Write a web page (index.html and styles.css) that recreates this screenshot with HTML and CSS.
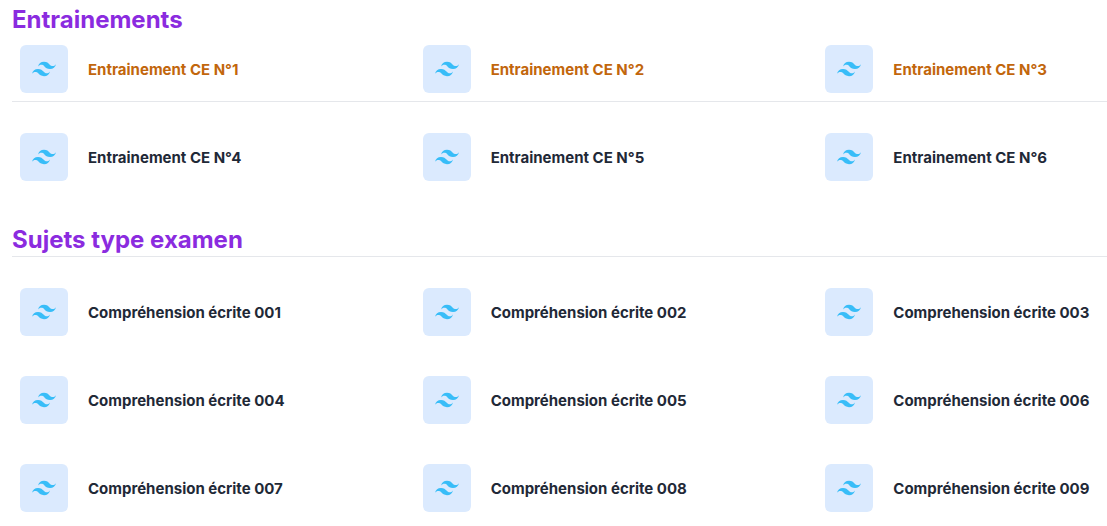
FILE: index.html
```html
<!DOCTYPE html>
<html lang="fr">
<head>
<meta charset="utf-8">
<meta name="viewport" content="width=device-width, initial-scale=1">
<title>Entrainements</title>
<link rel="stylesheet" href="styles.css">
</head>
<body>
<svg class="sprite" aria-hidden="true"><symbol id="wave" viewBox="0 0 24 24"><path d="M12.001 4.8c-3.2 0-5.2 1.6-6 4.8 1.2-1.6 2.6-2.2 4.2-1.8.913.228 1.565.89 2.288 1.624C13.666 10.618 15.027 12 18.001 12c3.2 0 5.2-1.6 6-4.8-1.2 1.6-2.6 2.2-4.2 1.8-.913-.228-1.565-.89-2.288-1.624C16.337 6.182 14.976 4.8 12.001 4.8zm-6 7.2c-3.2 0-5.2 1.6-6 4.8 1.2-1.6 2.6-2.2 4.2-1.8.913.228 1.565.89 2.288 1.624 1.177 1.194 2.538 2.576 5.512 2.576 3.2 0 5.2-1.6 6-4.8-1.2 1.6-2.6 2.2-4.2 1.8-.913-.228-1.565-.89-2.288-1.624C10.337 13.382 8.976 12 6.001 12z"/></symbol></svg>
<main class="page">
<section class="section">
<h2 class="title">Entrainements</h2>
<ul class="grid active ruled">
<li><a class="item" href="#"><span class="tile"><svg class="icon"><use href="#wave"/></svg></span><span class="label">Entrainement CE N°1</span></a></li>
<li><a class="item" href="#"><span class="tile"><svg class="icon"><use href="#wave"/></svg></span><span class="label">Entrainement CE N°2</span></a></li>
<li><a class="item" href="#"><span class="tile"><svg class="icon"><use href="#wave"/></svg></span><span class="label">Entrainement CE N°3</span></a></li>
</ul>
<ul class="grid spaced">
<li><a class="item" href="#"><span class="tile"><svg class="icon"><use href="#wave"/></svg></span><span class="label">Entrainement CE N°4</span></a></li>
<li><a class="item" href="#"><span class="tile"><svg class="icon"><use href="#wave"/></svg></span><span class="label">Entrainement CE N°5</span></a></li>
<li><a class="item" href="#"><span class="tile"><svg class="icon"><use href="#wave"/></svg></span><span class="label">Entrainement CE N°6</span></a></li>
</ul>
</section>
<section class="section">
<h2 class="title ruled">Sujets type examen</h2>
<ul class="grid spaced">
<li><a class="item" href="#"><span class="tile"><svg class="icon"><use href="#wave"/></svg></span><span class="label">Compréhension écrite 001</span></a></li>
<li><a class="item" href="#"><span class="tile"><svg class="icon"><use href="#wave"/></svg></span><span class="label">Compréhension écrite 002</span></a></li>
<li><a class="item" href="#"><span class="tile"><svg class="icon"><use href="#wave"/></svg></span><span class="label">Comprehension écrite 003</span></a></li>
<li><a class="item" href="#"><span class="tile"><svg class="icon"><use href="#wave"/></svg></span><span class="label">Comprehension écrite 004</span></a></li>
<li><a class="item" href="#"><span class="tile"><svg class="icon"><use href="#wave"/></svg></span><span class="label">Compréhension écrite 005</span></a></li>
<li><a class="item" href="#"><span class="tile"><svg class="icon"><use href="#wave"/></svg></span><span class="label">Compréhension écrite 006</span></a></li>
<li><a class="item" href="#"><span class="tile"><svg class="icon"><use href="#wave"/></svg></span><span class="label">Compréhension écrite 007</span></a></li>
<li><a class="item" href="#"><span class="tile"><svg class="icon"><use href="#wave"/></svg></span><span class="label">Compréhension écrite 008</span></a></li>
<li><a class="item" href="#"><span class="tile"><svg class="icon"><use href="#wave"/></svg></span><span class="label">Compréhension écrite 009</span></a></li>
</ul>
</section>
</main>
</body>
</html>
```
FILE: styles.css
```css
* { box-sizing: border-box; }
body { margin: 0; background: #fff; color: #1f2937; font-family: Inter, "Liberation Sans", sans-serif; }
.sprite { display: none; }
.page { padding: 4px 0 6px 12px; }
.section + .section { margin-top: 35px; }
.title { margin: 0; border-bottom: 1px solid transparent; font-size: 24px; line-height: 32px; font-weight: 700; color: #8b2bdf; }
.ruled { border-bottom: 1px solid #e5e7eb; }
.grid { display: grid; grid-template-columns: repeat(3, minmax(0, 1fr)); column-gap: 113px; row-gap: 24px; list-style: none; margin: 0; padding: 0; }
.spaced { padding-top: 23px; }
.item { display: flex; align-items: center; gap: 20px; padding: 8px; font-size: 15px; line-height: 24px; font-weight: 700; color: #1f2937; text-decoration: none; white-space: nowrap; }
.label { padding-top: 2px; }
.active .item { color: #c2660c; }
.tile { display: flex; flex: none; align-items: center; justify-content: center; width: 48px; height: 48px; border-radius: 6px; background: #dbeafe; }
.icon { width: 24px; height: 24px; fill: #38bdf8; }
```
